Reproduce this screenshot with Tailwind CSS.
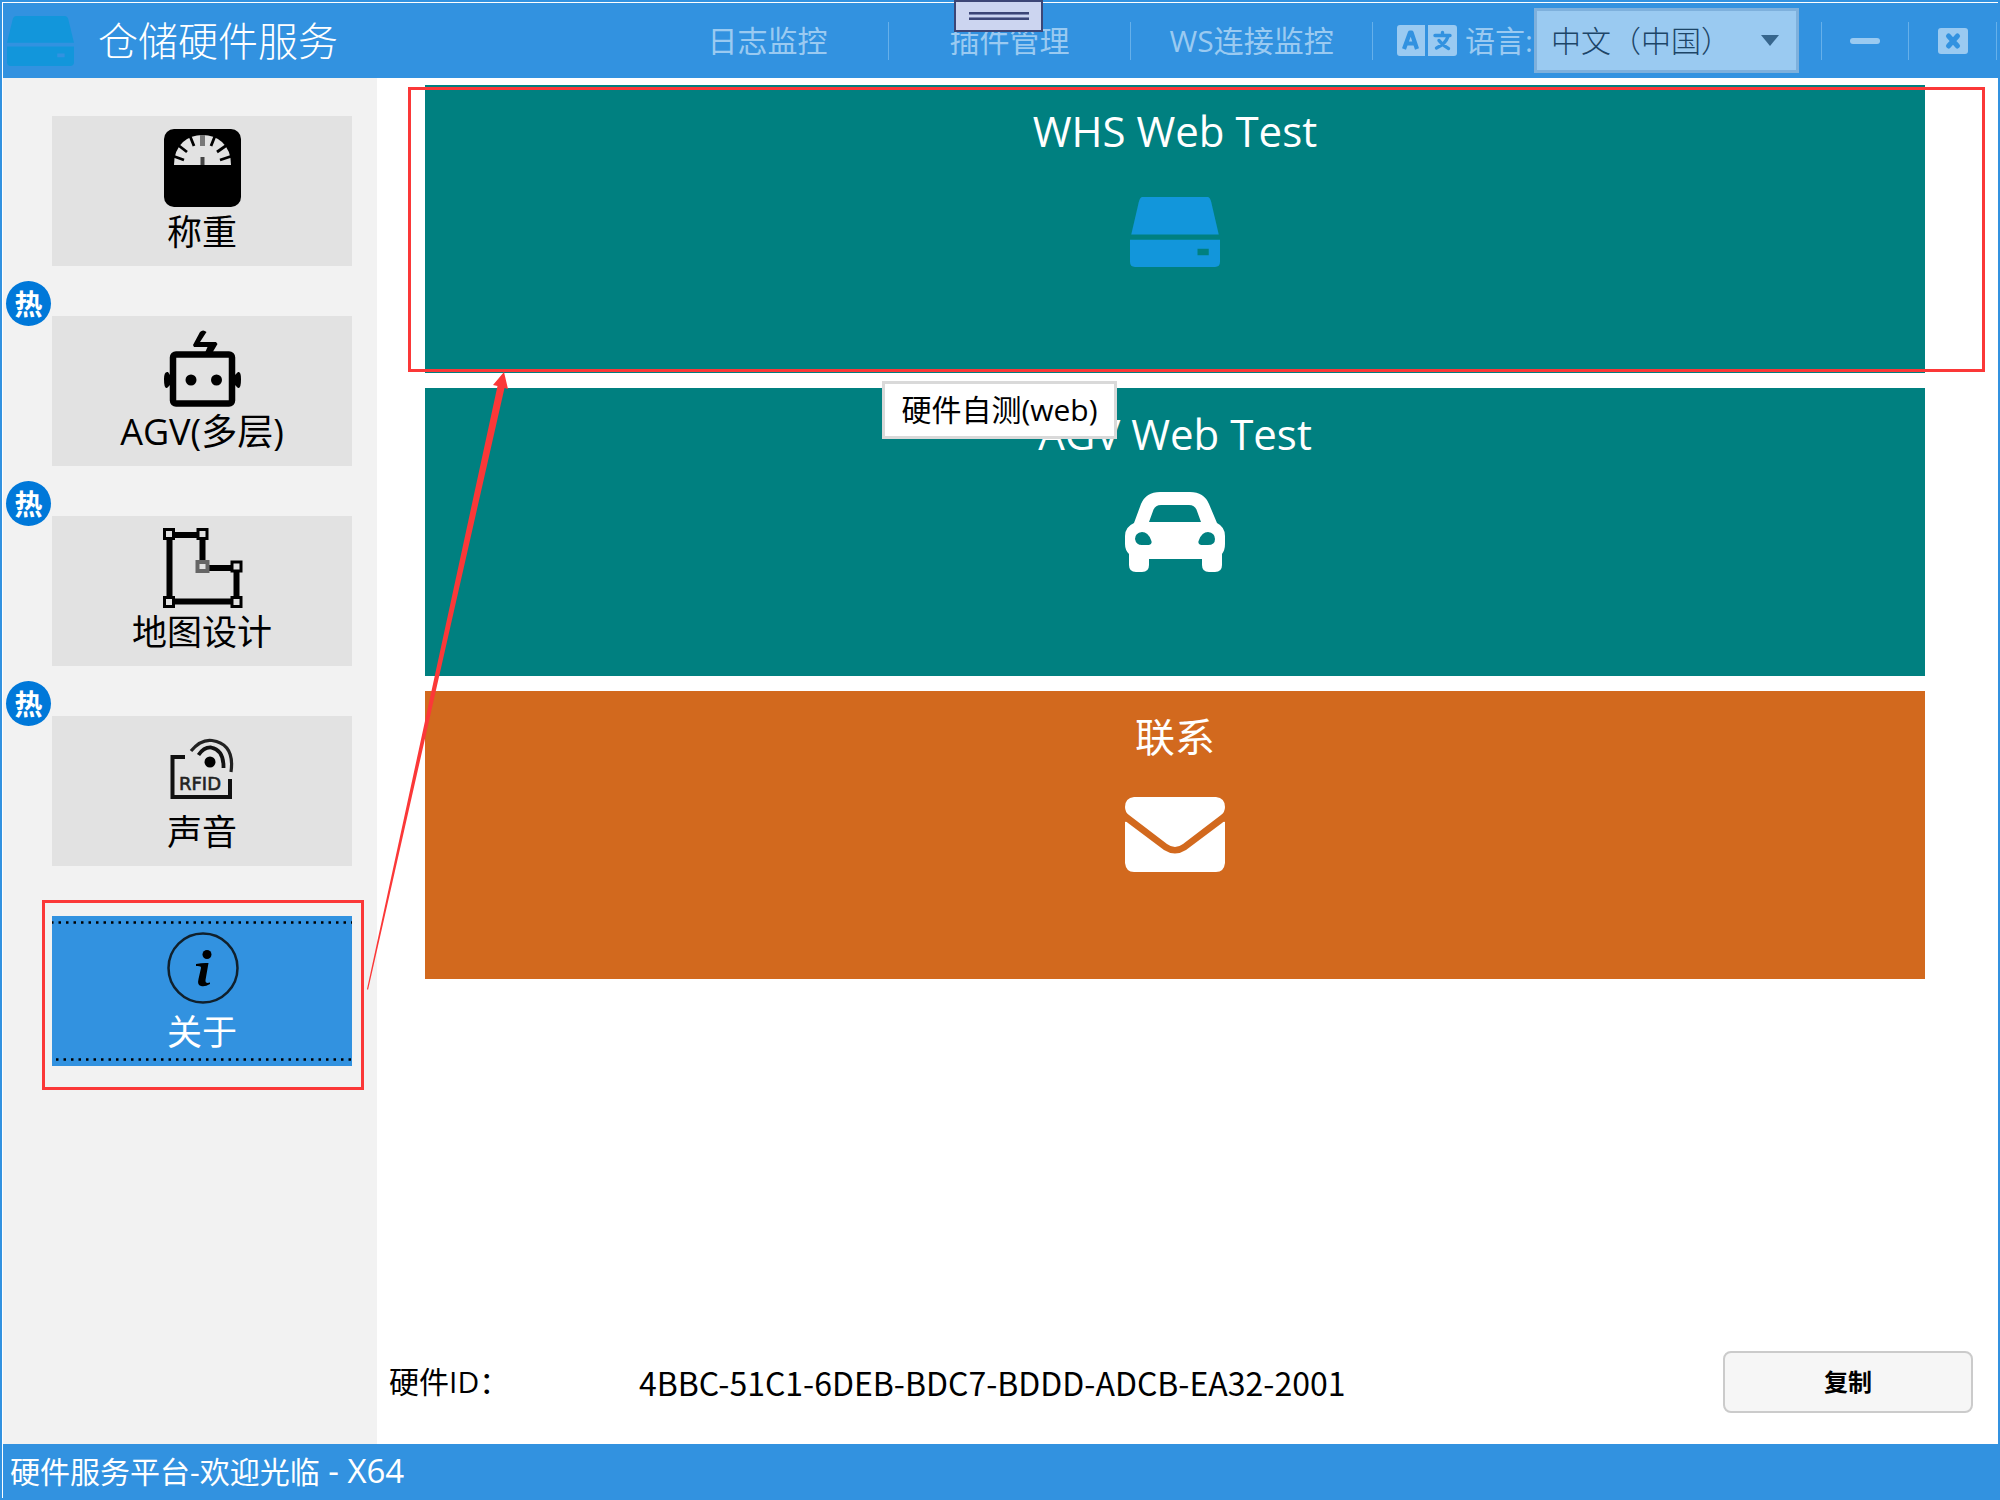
<!DOCTYPE html>
<html lang="zh-CN">
<head>
<meta charset="utf-8">
<title>仓储硬件服务</title>
<script src="https://cdn.jsdelivr.net/npm/@tailwindcss/browser@4"></script>
</head>
<body class="bg-[#3292e0]">
<div class="relative flex min-h-screen flex-col border-2 border-[#3292e0] bg-white font-['Open_Sans','Noto_Sans_CJK_SC',sans-serif] text-black">
  <header class="flex h-[76px] items-center border-t border-l border-white bg-[#3292e0] pr-px text-[30px] leading-10 text-[#9acaf1]">
    <svg class="ml-1 h-[50px] w-[67px] shrink-0" viewBox="0 0 72 54" preserveAspectRatio="none" fill="#1296db" aria-hidden="true">
      <path d="M10 0H62Q65 0 66 4L72 29H0L6 4Q7 0 10 0Z"/>
      <path fill-rule="evenodd" d="M0 33H72V50Q72 54 68 54H4Q0 54 0 50ZM54 40.500H62V44.500H54Z"/>
    </svg>
    <h1 class="ml-6 text-[40px] leading-[48px] font-light whitespace-nowrap text-white">仓储硬件服务</h1>
    <nav class="ml-auto flex shrink-0 items-center">
      <button class="h-[38px] w-[242px] border-r border-[#66b0ea]"><span class="block leading-[36px]">日志监控</span></button>
      <button class="h-[38px] w-[242px] border-r border-[#66b0ea]"><span class="block leading-[36px]">插件管理</span></button>
      <button class="h-[38px] w-[242px] border-r border-[#66b0ea]"><span class="block leading-[36px]">WS连接监控</span></button>
    </nav>
    <svg class="ml-6 h-[32px] w-[60px] shrink-0" viewBox="0 0 60 32" aria-hidden="true">
      <path fill="#9acaf1" d="M3 0H28V31H3Q0 31 0 28V3Q0 0 3 0ZM31 0H57Q60 0 60 3V28Q60 31 57 31H31Z"/>
      <path fill="none" stroke="#3292e0" stroke-width="4.200" stroke-linejoin="round" d="M7 24L13 7.500H14.500L20 24M9.500 18.500H18"/>
      <path fill="none" stroke="#3292e0" stroke-width="3.400" stroke-linecap="round" d="M38 10.500H53M45.500 7.500V10.500M51 11.500Q48.500 19 39.500 23M42 15.500Q45.500 20.500 51.500 23.500"/>
    </svg>
    <label for="lang" class="ml-2 shrink-0 whitespace-nowrap">语言:</label>
    <div class="relative ml-px shrink-0">
      <select id="lang" class="h-[65px] w-[265px] appearance-none border-3 border-[#7eb0dc] bg-[#9acaf1] pl-[14px] text-[30px] font-light text-[#1d4567]">
        <option>中文（中国）</option>
      </select>
      <svg class="pointer-events-none absolute top-[27px] right-5 h-[11px] w-[18px]" viewBox="0 0 18 11" fill="#37668d" aria-hidden="true"><path d="M0 0H18L9 11Z"/></svg>
    </div>
    <div class="ml-[22px] flex shrink-0">
      <button aria-label="最小化" class="flex h-[38px] w-[88px] items-center justify-center border-x border-[#66b0ea]"><span class="h-[6px] w-[30px] rounded-sm bg-[#9acaf1]"></span></button>
      <button aria-label="关闭" class="flex h-[38px] w-[88px] items-center justify-center border-r border-[#66b0ea]">
        <svg class="h-[26px] w-[30px]" viewBox="0 0 30 26" aria-hidden="true"><rect width="30" height="26" rx="3" fill="#9acaf1"/><path d="M10.500 8L19.500 18M19.500 8L10.500 18" stroke="#3292e0" stroke-width="5" stroke-linecap="round"/></svg>
      </button>
    </div>
  </header>

  <div class="flex grow border-l border-white">
    <aside class="w-[374px] shrink-0 bg-[#f2f2f2] pt-[38px]">
      <ul class="flex flex-col gap-[50px] pr-[25px] pl-[49px] text-[35px] leading-[40px]">
        <li class="relative">
          <button class="flex h-[150px] w-full flex-col items-center bg-[#e2e2e2] pt-3">
            <svg class="h-20 w-20 shrink-0" viewBox="0 0 80 80" aria-hidden="true">
              <rect x="2" y="1" width="77" height="78" rx="10"/>
              <path fill="#e2e2e2" d="M12 37Q12 22 21 14Q29 7 40.500 7Q52 7 60 14Q69 22 69 37Z"/>
              <path fill="none" stroke="#000" stroke-width="2.800" d="M11 28L22 32M16 17L25 24M28 8L32 18M53 8L49 18M65 17L55 24M70 28L58 32"/>
              <path stroke="#777" stroke-width="5" d="M40.500 7V18"/><path stroke="#444" stroke-width="4" d="M40.500 29V37"/>
            </svg>
            <span class="mt-1">称重</span>
          </button>
        </li>
        <li class="relative">
          <span class="absolute -top-[35px] -left-[46px] flex size-[45px] items-center justify-center rounded-full bg-[#0078d9] text-[28px] font-bold text-white">热</span>
          <button class="flex h-[150px] w-full flex-col items-center bg-[#e2e2e2] pt-3">
            <svg class="h-20 w-20 shrink-0" viewBox="0 0 80 80" aria-hidden="true">
              <rect x="11" y="26.500" width="59" height="49" rx="3" fill="none" stroke="#000" stroke-width="6.500"/>
              <circle cx="29" cy="52" r="5.500"/><circle cx="54.500" cy="52" r="5.500"/>
              <path d="M8 47L6 44Q2 43 2 51Q2 61 5 60L8 57ZM73 47L76 44Q79 43 79 51Q79 61 76 60L73 57ZM38 4Q41 1 44.500 4L38 14H54L55.500 16L49 27H42L45.500 19H32L31 17Z"/>
            </svg>
            <span class="mt-1 text-[36px]">AGV(多层)</span>
          </button>
        </li>
        <li class="relative">
          <span class="absolute -top-[35px] -left-[46px] flex size-[45px] items-center justify-center rounded-full bg-[#0078d9] text-[28px] font-bold text-white">热</span>
          <button class="flex h-[150px] w-full flex-col items-center bg-[#e2e2e2] pt-3">
            <svg class="h-20 w-20 shrink-0 overflow-visible" viewBox="0 0 80 80" aria-hidden="true">
              <path fill="none" stroke="#000" stroke-width="6" d="M7.500 7H40.500V40H74.500V73.500H7.500Z"/>
              <g fill="#e2e2e2" stroke="#000" stroke-width="3"><rect x="2.500" y="1.500" width="9" height="9"/><rect x="36" y="1.500" width="9" height="9"/><rect x="70" y="34" width="9" height="9"/><rect x="2.500" y="69.500" width="9" height="9"/><rect x="70" y="69.500" width="9" height="9"/></g>
              <rect x="35.500" y="34" width="10" height="9" fill="#e2e2e2" stroke="#666" stroke-width="4"/>
            </svg>
            <span class="mt-1">地图设计</span>
          </button>
        </li>
        <li class="relative">
          <span class="absolute -top-[35px] -left-[46px] flex size-[45px] items-center justify-center rounded-full bg-[#0078d9] text-[28px] font-bold text-white">热</span>
          <button class="flex h-[150px] w-full flex-col items-center bg-[#e2e2e2] pt-3">
            <svg class="h-20 w-20 shrink-0" viewBox="0 0 80 80" aria-hidden="true">
              <path fill="none" stroke="#111" stroke-width="4" d="M23 29H10.500V69H68V51"/>
              <circle cx="48" cy="34" r="5.500"/>
              <path fill="none" stroke="#111" stroke-width="3.800" d="M36.500 27Q42 19 49 19.500Q62 22 61.500 40"/>
              <path fill="none" stroke="#222" stroke-width="3.200" d="M29 23Q39 11 50 12.500Q73 16 69 44"/>
              <text x="17" y="62" font-family="DejaVu Sans, sans-serif" font-size="18" fill="#222" stroke="#222" stroke-width="0.600">RFID</text>
            </svg>
            <span class="mt-1">声音</span>
          </button>
        </li>
        <li class="relative">
          <button class="relative flex h-[150px] w-full flex-col items-center bg-[#3292e0] pt-3 text-white">
            <svg class="absolute inset-0 h-full w-full" aria-hidden="true"><path d="M-1 6.500H300M4 143.500H300" stroke="#000" stroke-width="2.500" stroke-dasharray="2.500 5"/></svg>
            <svg class="h-20 w-20 shrink-0" viewBox="0 0 80 80" aria-hidden="true">
              <circle cx="41" cy="40" r="34.500" fill="none" stroke="#10202c" stroke-width="2.500"/>
              <circle cx="45" cy="26.500" r="4.500"/>
              <path d="M34 36Q41 34.500 46.500 35L43.500 52Q43 56 48 54.500V56Q43 59 39 58Q35 57 36.500 51L39 40Q39.500 37.500 34 38Z"/>
            </svg>
            <span class="mt-1">关于</span>
          </button>
          <div class="pointer-events-none absolute -top-4 -right-3 -bottom-6 -left-[10px] border-3 border-[#fb3838]"></div>
        </li>
      </ul>
    </aside>

    <main class="relative flex grow flex-col">
      <div class="flex flex-col gap-[15px] pt-[7px] pr-[73px] pl-12 text-[42px] leading-[60px] text-white">
        <div class="relative">
          <button class="flex h-[288px] w-full flex-col items-center bg-[#008080] pt-4">
            <span>WHS Web Test</span>
            <svg class="mt-9 h-[70px] w-[90px]" viewBox="0 0 72 54" preserveAspectRatio="none" fill="#1296db" aria-hidden="true">
              <path d="M10 0H62Q64 0 65 4L71 29H1L7 4Q8 0 10 0Z"/>
              <path fill-rule="evenodd" d="M0 33H72V50Q72 54 68 54H4Q0 54 0 50ZM54 40H63V45H54Z"/>
            </svg>
          </button>
          <div class="pointer-events-none absolute top-[2px] -right-[60px] bottom-px -left-[17px] border-3 border-[#fb3838]"></div>
          <div role="tooltip" class="absolute top-[296px] left-[457px] z-10 h-[58px] w-[235px] border-3 border-[#d9d9d9] bg-white text-center text-[30px] leading-[52px] whitespace-nowrap text-black">硬件自测(web)</div>
        </div>
        <button class="flex h-[288px] flex-col items-center bg-[#008080] pt-4">
          <span>AGV Web Test</span>
          <svg class="mt-[28px] h-[80px] w-[100px]" viewBox="0 0 100 80" fill="#fff" aria-hidden="true">
            <path fill-rule="evenodd" d="M9 31L16 12Q21 0 35 0H65Q79 0 84 12L92 31Q100 35 100 44V52Q100 58 97 62V73Q97 80 90 80H84Q77 80 77 73V67H24V73Q24 80 17 80H11Q4 80 4 73V62Q0 58 0 52V44Q0 35 9 31ZM24 30H76L72 19Q70 13 64 13H36Q30 13 28 19ZM17 40Q10 41 10 47Q11 53 17 53H24Q28 52 26 48Q23 40 17 40ZM83 40Q77 40 74 48Q72 52 76 53H83Q90 53 90 47Q90 41 83 40Z"/>
          </svg>
        </button>
        <button class="flex h-[288px] flex-col items-center bg-[#d2691e] pt-4">
          <span class="text-[40px]">联系</span>
          <svg class="mt-[30px] h-[75px] w-[100px]" viewBox="0 0 100 75" fill="#fff" aria-hidden="true">
            <path d="M9 0H91Q100 1 100 10Q100 15 96 18L58 47Q50 53 42 47L4 18Q0 15 0 10Q0 1 9 0ZM0 25Q1 24 3 26L39 53Q50 60 61 53L97 26Q99 24 100 25V66Q99 75 91 75H9Q1 75 0 66Z"/>
          </svg>
        </button>
      </div>
      <div class="mt-auto flex h-[124px] items-center pr-[25px] pl-3 text-[30px] leading-10">
        <span class="w-[250px] shrink-0">硬件ID：</span>
        <span class="grow font-['Noto_Sans_CJK_SC',sans-serif] text-[32px] whitespace-nowrap">4BBC-51C1-6DEB-BDC7-BDDD-ADCB-EA32-2001</span>
        <button class="h-[62px] w-[250px] shrink-0 rounded-lg border-2 border-[#cbcbcb] bg-[#f6f6f6] text-2xl font-semibold">复制</button>
      </div>
      <svg class="pointer-events-none absolute top-[294px] -left-[10px] h-[618px] w-[142px]" viewBox="0 0 142 618" fill="#fb3838" aria-hidden="true"><path d="M137 0L141 17L137.500 16L1 618L0 617L130.500 14L126 13Z"/></svg>
    </main>
  </div>

  <footer class="h-[54px] border-l border-white bg-[#3292e0] pl-[7px] text-[30px] leading-[54px] whitespace-pre text-white">硬件服务平台-欢迎光临<span class="text-[33px]"> - X64</span></footer>

  <div class="absolute -top-[2px] left-[952px] flex h-8 w-[89px] flex-col items-center justify-center gap-[2px] border-2 border-[#3c4676] bg-[#ccd5f0]">
    <span class="h-[3px] w-[60px] border-b border-[#7c86b0] bg-[#3c4676]"></span>
    <span class="h-[3px] w-[60px] border-t border-[#7c86b0] bg-[#3c4676]"></span>
  </div>
</div>
</body>
</html>
